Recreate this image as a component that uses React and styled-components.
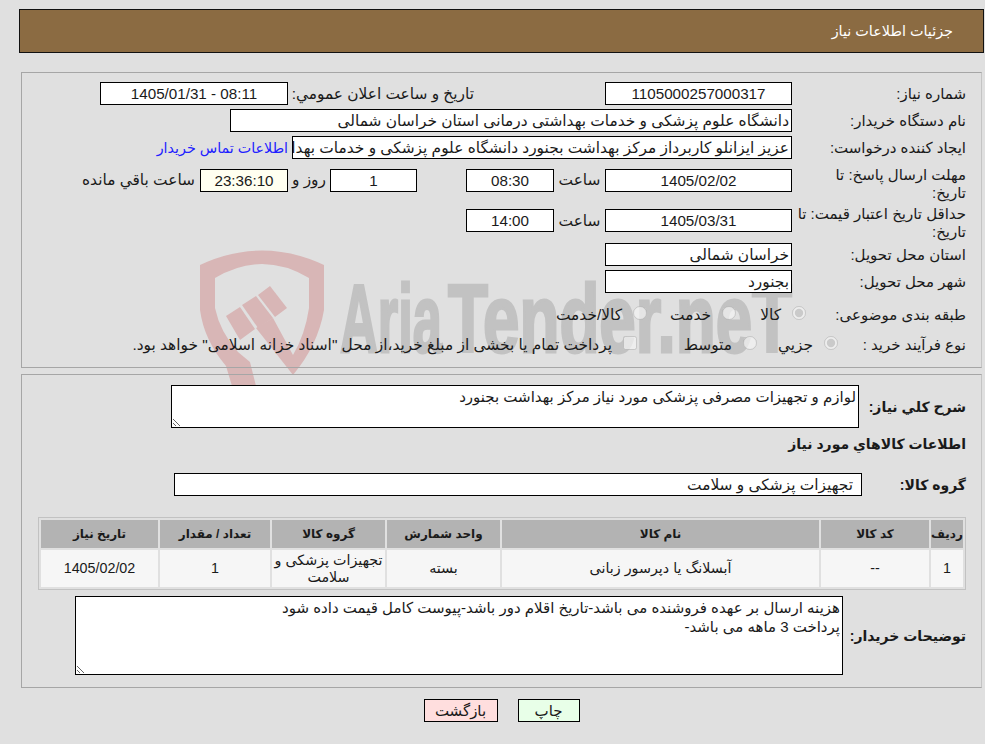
import React from 'react';
import styled, { createGlobalStyle } from 'styled-components';

const GlobalStyle = createGlobalStyle`
  html, body {
    margin: 0;
    padding: 0;
    background: #e0e0e0;
  }
  body {
    font-family: "Liberation Sans", "DejaVu Sans", sans-serif;
    font-size: 15.4px;
    color: #1a1a1a;
  }
`;

const Page = styled.div`
  position: relative;
  width: 985px;
  height: 744px;
  overflow: hidden;
  box-sizing: border-box;
`;

const Watermark = styled.svg`
  position: absolute;
  left: 0;
  top: 0;
  width: 985px;
  height: 744px;
`;

const Content = styled.div`
  position: relative;
  box-sizing: border-box;
  height: 100%;
  padding: 9px 1px 0 19px;
  direction: rtl;
`;

const Header = styled.div`
  box-sizing: border-box;
  height: 44px;
  padding: 0 30px;
  display: flex;
  align-items: center;
  background: #8b6b42;
  border: 1px solid #111;
  color: #fff;
  font-size: 14.4px;
`;

const Panel = styled.section`
  box-sizing: border-box;
  width: 961px;
  height: ${(p) => p.$h}px;
  margin: ${(p) => p.$mt}px 2px 0 0;
  padding: ${(p) => p.$pt}px 15px 0 0;
  border: 1px solid #a6a6a6;
  border-right-color: #c4c4c4;
`;

const Row = styled.div`
  display: flex;
  align-items: center;
  height: ${(p) => p.$h || 23}px;
  margin-top: ${(p) => p.$mt ?? 0}px;
  margin-bottom: ${(p) => p.$mb ?? 0}px;
`;

const Label = styled.div`
  flex: none;
  width: ${(p) => p.$w}px;
  box-sizing: border-box;
  line-height: 18px;
  padding-left: ${(p) => p.$pl || 0}px;
  padding-top: ${(p) => p.$pt || 0}px;
  font-weight: ${(p) => (p.$bold ? 700 : 400)};
  font-size: ${(p) => (p.$bold ? 14 : 15)}px;
`;

const Inline = styled.div`
  flex: none;
  box-sizing: border-box;
  width: ${(p) => (p.$w ? `${p.$w}px` : 'auto')};
  padding-right: ${(p) => p.$pr || 0}px;
  text-align: ${(p) => (p.$center ? 'center' : 'right')};
  white-space: nowrap;
`;

const Field = styled.div`
  flex: none;
  box-sizing: border-box;
  width: ${(p) => p.$w}px;
  height: 23px;
  padding: 0 ${(p) => p.$pad ?? 2}px;
  background: ${(p) => p.$bg || '#fff'};
  border: 1px solid #000;
  font-size: ${(p) => (p.$center ? 15.2 : 15.4)}px;
  line-height: 22px;
  text-align: ${(p) => (p.$center ? 'center' : 'right')};
  white-space: nowrap;
  overflow: hidden;
`;

const Spacer = styled.div`
  flex: none;
  width: ${(p) => p.$w}px;
`;

const ContactLink = styled.a`
  color: #2020ff;
  font-size: 14.3px;
  text-decoration: none;
  margin-right: 4px;
  white-space: nowrap;
`;

const Option = styled.label`
  flex: none;
  display: flex;
  align-items: center;
  gap: 11px;
  width: ${(p) => (p.$w ? `${p.$w}px` : 'auto')};
  white-space: nowrap;

  input {
    width: 14px;
    height: 14px;
    margin: 0 0 5px;
  }
`;

const Heading = styled.h3`
  margin: 0;
  height: 32px;
  line-height: 32px;
  font-size: 14px;
  font-weight: 700;
`;

const Note = styled.textarea`
  flex: none;
  box-sizing: border-box;
  width: ${(p) => p.$w}px;
  height: ${(p) => p.$h}px;
  padding: 1px 2px;
  background: #fff;
  border: 1px solid #000;
  border-radius: 0;
  outline: none;
  font: inherit;
  font-size: 15px;
  line-height: 19px;
  color: #1a1a1a;
`;

const Table = styled.table`
  table-layout: fixed;
  width: 928px;
  margin: 21px 0 6px;
  border: 1px solid #c2c2c2;
  border-spacing: 2px;
`;

const Th = styled.th`
  width: ${(p) => p.$w}px;
  height: 28px;
  padding: 0;
  background: #b3b3b3;
  font-size: 12px;
  font-weight: 700;
  text-align: center;
`;

const Td = styled.td`
  height: 37px;
  padding: 0;
  background: #f6f6f6;
  font-size: 14.3px;
  line-height: 17px;
  text-align: center;
`;

const Buttons = styled.div`
  display: flex;
  justify-content: center;
  gap: 20px;
  margin-top: 11px;
`;

const Button = styled.button`
  box-sizing: border-box;
  width: ${(p) => p.$w}px;
  height: 23px;
  padding: 0;
  background: ${(p) => p.$bg};
  border: 1px solid #000;
  border-radius: 0;
  font: inherit;
  font-size: 15px;
  color: #1a1a1a;
`;

const columns = [
  { title: 'ردیف', w: 32 },
  { title: 'کد کالا', w: 108 },
  { title: 'نام کالا', w: 317 },
  { title: 'واحد شمارش', w: 113 },
  { title: 'گروه کالا', w: 113 },
  { title: 'تعداد / مقدار', w: 110 },
  { title: 'تاریخ نیاز', w: 117 },
];

const cells = ['1', '--', 'آبسلانگ یا دپرسور زبانی', 'بسته', 'تجهیزات پزشکی و سلامت', '1', '1405/02/02'];

const logoText = {
  y: 352,
  fill: '#c2c2c2',
  stroke: '#c2c2c2',
  strokeWidth: 3,
  fontFamily: 'Liberation Sans, sans-serif',
  fontWeight: 700,
  fontSize: 96,
  lengthAdjust: 'spacingAndGlyphs',
  direction: 'ltr',
};

const LogoMark = () => (
  <Watermark viewBox="0 0 985 744" aria-hidden="true">
    <g fill="#d8b6b6">
      <path d="M200 265 Q262 236 324 265 L324 310 Q318 345 293 375 L256 328 L273 318 L293 355 Q305 335 309 308 L309 278 Q262 250 215 278 L215 308 Q220 332 238 352 L250 362 L256 386 L232 386 L226 366 Q204 340 200 310 Z" />
      <path d="M226 316 L240 307 L255 329 L240 340 Z" />
      <path d="M242 305 L256 296 L273 318 L258 328 Z" />
      <path d="M258 295 L270 286 L287 308 L275 317 Z" />
    </g>
    <text x="340" textLength="102" {...logoText}>Aria</text>
    <text x="448" textLength="344" {...logoText}>Tender.neT</text>
  </Watermark>
);

export default function App() {
  return (
    <>
      <GlobalStyle />
      <Page>
        <LogoMark />
        <Content>
          <Header>جزئیات اطلاعات نیاز</Header>

          <Panel $h={296} $mt={19} $pt={9}>
            <Row $mb={4}>
              <Label $w={174}>شماره نیاز:</Label>
              <Field $w={187} $center>1105000257000317</Field>
              <Inline $w={317} $pr={131}>تاریخ و ساعت اعلان عمومي:</Inline>
              <Field $w={188} $center><bdi dir="ltr">1405/01/31 - 08:11</bdi></Field>
            </Row>
            <Row $mb={4}>
              <Label $w={174}>نام دستگاه خریدار:</Label>
              <Field $w={562}>دانشگاه علوم پزشکی و خدمات بهداشتی درمانی استان خراسان شمالی</Field>
            </Row>
            <Row>
              <Label $w={174}>ایجاد کننده درخواست:</Label>
              <Field $w={500}>عزیز ایزانلو کاربرداز مرکز بهداشت بجنورد دانشگاه علوم پزشکی و خدمات بهداشتی درمانی استان خراسان شمالی</Field>
              <ContactLink href="#">اطلاعات تماس خریدار</ContactLink>
            </Row>
            <Row $h={42}>
              <Label $w={174} $pl={12} $pt={8}>مهلت ارسال پاسخ: تا تاریخ:</Label>
              <Field $w={187} $center>1405/02/02</Field>
              <Inline $w={51} $center>ساعت</Inline>
              <Field $w={88} $center>08:30</Field>
              <Spacer $w={49} />
              <Field $w={87} $center>1</Field>
              <Inline $w={42} $center>روز و</Inline>
              <Field $w={88} $bg="#fffff0" $center>23:36:10</Field>
              <Inline $pr={5}>ساعت باقي مانده</Inline>
            </Row>
            <Row $h={39} $mb={3}>
              <Label $w={174} $pl={4} $pt={4}>حداقل تاریخ اعتبار قیمت: تا تاریخ:</Label>
              <Field $w={187} $center>1405/03/31</Field>
              <Inline $w={51} $center>ساعت</Inline>
              <Field $w={88} $center>14:00</Field>
            </Row>
            <Row $mb={4}>
              <Label $w={174}>استان محل تحویل:</Label>
              <Field $w={187}>خراسان شمالی</Field>
            </Row>
            <Row>
              <Label $w={174}>شهر محل تحویل:</Label>
              <Field $w={187}>بجنورد</Field>
            </Row>
            <Row $h={30} $mt={7}>
              <Label $w={160}>طبقه بندی موضوعی:</Label>
              <Option $w={70}><input type="radio" name="kind" disabled defaultChecked />کالا</Option>
              <Option $w={89}><input type="radio" name="kind" disabled />خدمت</Option>
              <Option><input type="radio" name="kind" disabled />کالا/خدمت</Option>
            </Row>
            <Row $h={30}>
              <Label $w={128}>نوع فرآیند خرید :</Label>
              <Option $w={81}><input type="radio" name="mode" disabled defaultChecked />جزيي</Option>
              <Option $w={120}><input type="radio" name="mode" disabled />متوسط</Option>
              <Option><input type="checkbox" disabled />پرداخت تمام یا بخشی از مبلغ خرید،از محل "اسناد خزانه اسلامی" خواهد بود.</Option>
            </Row>
          </Panel>

          <Panel $h={314} $mt={6} $pt={10}>
            <Row $h={43}>
              <Label $w={107} $bold>شرح کلي نیاز:</Label>
              <Note $w={688} $h={43} readOnly defaultValue="لوازم و تجهیزات مصرفی پزشکی مورد نیاز مرکز بهداشت بجنورد" />
            </Row>
            <Heading>اطلاعات کالاهاي مورد نیاز</Heading>
            <Row $mt={13}>
              <Label $w={104} $bold>گروه کالا:</Label>
              <Field $w={688} $pad={8}>تجهیزات پزشکی و سلامت</Field>
            </Row>
            <Table>
              <thead>
                <tr>
                  {columns.map((col) => (
                    <Th key={col.title} $w={col.w}>{col.title}</Th>
                  ))}
                </tr>
              </thead>
              <tbody>
                <tr>
                  {cells.map((cell, i) => (
                    <Td key={i}>{cell}</Td>
                  ))}
                </tr>
              </tbody>
            </Table>
            <Row $h={79}>
              <Label $w={123} $bold>توضیحات خریدار:</Label>
              <Note
                $w={768}
                $h={79}
                readOnly
                defaultValue={'هزینه ارسال بر عهده فروشنده می باشد-تاریخ اقلام دور باشد-پیوست کامل قیمت داده شود\nپرداخت 3 ماهه می باشد-'}
              />
            </Row>
          </Panel>

          <Buttons>
            <Button $w={62} $bg="#e8ffe8">چاپ</Button>
            <Button $w={74} $bg="#ffdede">بازگشت</Button>
          </Buttons>
        </Content>
      </Page>
    </>
  );
}
